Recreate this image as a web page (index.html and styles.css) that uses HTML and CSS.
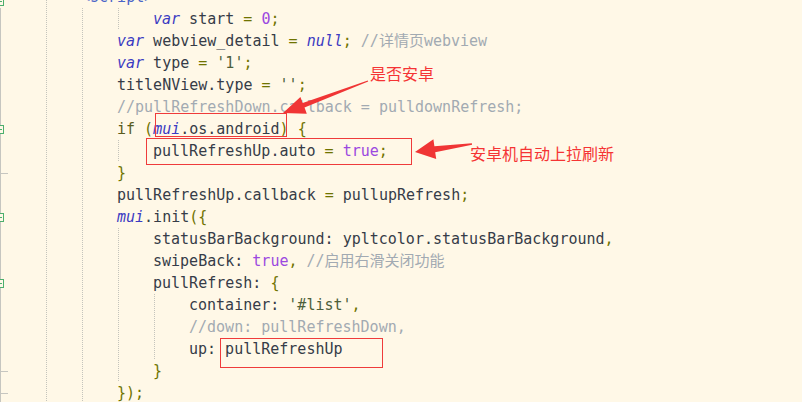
FILE: index.html
```html
<!DOCTYPE html>
<html lang="zh">
<head>
<meta charset="utf-8">
<title>code</title>
<link rel="stylesheet" href="styles.css">
</head>
<body>
<div class="editor">
  <div class="code">
    <div class="row"><div class="gut first"><span class="fold top"></span></div><div class="ln i1"><span class="t">&lt;script&gt;</span></div></div>
    <div class="row"><div class="gut"></div><div class="ln i3"><span class="k">var</span> start <span class="p">=</span> <span class="n">0</span><span class="p">;</span></div></div>
    <div class="row"><div class="gut"></div><div class="ln i2"><span class="k">var</span> webview_detail <span class="p">=</span> <span class="k">null</span><span class="p">;</span> <span class="c">//详情页webview</span></div></div>
    <div class="row"><div class="gut"></div><div class="ln i2"><span class="k">var</span> type <span class="p">=</span> <span class="s">'1'</span><span class="p">;</span></div></div>
    <div class="row"><div class="gut"></div><div class="ln i2">titleNView.type <span class="p">=</span> <span class="s">''</span><span class="p">;</span></div></div>
    <div class="row"><div class="gut"></div><div class="ln i2"><span class="c">//pullRefreshDown.callback = pulldownRefresh;</span></div></div>
    <div class="row"><div class="gut"><span class="fold"></span></div><div class="ln i2"><span class="f">if</span> <span class="p">(</span><span class="k">mui</span>.os.android<span class="p">)</span> <span class="p">{</span></div></div>
    <div class="row"><div class="gut"></div><div class="ln i3">pullRefreshUp.auto <span class="p">=</span> <span class="n">true</span><span class="p">;</span></div></div>
    <div class="row"><div class="gut"><span class="tick"></span></div><div class="ln i2"><span class="p">}</span></div></div>
    <div class="row"><div class="gut"></div><div class="ln i2">pullRefreshUp.callback <span class="p">=</span> pullupRefresh<span class="p">;</span></div></div>
    <div class="row"><div class="gut"><span class="fold"></span></div><div class="ln i2"><span class="k">mui</span>.init<span class="p">({</span></div></div>
    <div class="row"><div class="gut"></div><div class="ln i3">statusBarBackground: ypltcolor.statusBarBackground<span class="p">,</span></div></div>
    <div class="row"><div class="gut"></div><div class="ln i3">swipeBack: <span class="n">true</span><span class="p">,</span> <span class="c">//启用右滑关闭功能</span></div></div>
    <div class="row"><div class="gut"><span class="fold"></span></div><div class="ln i3">pullRefresh: <span class="p">{</span></div></div>
    <div class="row"><div class="gut"></div><div class="ln i4">container: <span class="s">'#list'</span><span class="p">,</span></div></div>
    <div class="row"><div class="gut"></div><div class="ln i4"><span class="c">//down: pullRefreshDown,</span></div></div>
    <div class="row"><div class="gut"></div><div class="ln i4">up: pullRefreshUp</div></div>
    <div class="row"><div class="gut"><span class="tick"></span></div><div class="ln i3"><span class="p">}</span></div></div>
    <div class="row"><div class="gut"><span class="tick"></span></div><div class="ln i2"><span class="p">});</span></div></div>
  </div>

  <div class="notes">
    <div class="box box-a"></div>
    <div class="box box-b"></div>
    <div class="box box-c"></div>
    <div class="label label-a">是否安卓</div>
    <div class="label label-b">安卓机自动上拉刷新</div>
    <svg class="arrows" width="802" height="402" viewBox="0 0 802 402">
      <polygon fill="#f03535" points="368.2,81.5 367.8,80.5 302.7,103.0 300.4,96.9 283,113 306.8,113.7 304.5,107.6"/>
      <polygon fill="#f03535" points="472.1,144.7 471.9,143.3 434.4,146.2 433.4,139.3 415,152 436.2,159.1 435.2,152.2"/>
    </svg>
  </div>
</div>
</body>
</html>
```

FILE: styles.css
```css
html, body {
  margin: 0;
  padding: 0;
  background: #fff8e7;
}
body {
  width: 802px;
  height: 402px;
  overflow: hidden;
}
.editor {
  position: relative;
  width: 802px;
  height: 402px;
  overflow: hidden;
  background: #fff8e7;
}
.code {
  display: flex;
  flex-direction: column;
  margin-top: -14px;
  font-family: "DejaVu Sans Mono", "Noto Sans CJK SC", monospace;
  font-size: 15px;
  color: #363c48;
}
.row {
  display: flex;
  height: 22px;
}
.gut {
  width: 44px;
  flex: none;
  border-left: 1px solid #c6c6c0;
  display: flex;
  align-items: center;
}
.gut.first {
  border-left-color: transparent;
}
.fold {
  display: block;
  width: 9px;
  height: 9px;
  box-sizing: border-box;
  margin-left: -6px;
  border: 1px solid #4caf6e;
  background: #fff8e7;
  position: relative;
}
.fold::after {
  content: "";
  position: absolute;
  left: 1px;
  right: 1px;
  top: 3px;
  height: 1px;
  background: #4caf6e;
}
.fold.top {
  margin-top: 8px;
}
.tick {
  display: block;
  width: 7px;
  height: 1px;
  background: #c6c6c0;
}
.ln {
  flex: 1;
  height: 22px;
  line-height: 22px;
  white-space: pre;
  background-repeat: repeat-y;
  background-size: 1px 2px;
}
.i1 {
  padding-left: 36px;
  background-image: linear-gradient(#c4c4bc 50%, transparent 50%);
  background-position: 1px 0;
}
.i2 {
  padding-left: 72px;
  background-image: linear-gradient(#c4c4bc 50%, transparent 50%), linear-gradient(#c4c4bc 50%, transparent 50%);
  background-position: 1px 0, 37px 0;
}
.i3 {
  padding-left: 108px;
  background-image: linear-gradient(#c4c4bc 50%, transparent 50%), linear-gradient(#c4c4bc 50%, transparent 50%), linear-gradient(#c4c4bc 50%, transparent 50%);
  background-position: 1px 0, 37px 0, 73px 0;
}
.i4 {
  padding-left: 144px;
  background-image: linear-gradient(#c4c4bc 50%, transparent 50%), linear-gradient(#c4c4bc 50%, transparent 50%), linear-gradient(#c4c4bc 50%, transparent 50%), linear-gradient(#c4c4bc 50%, transparent 50%);
  background-position: 1px 0, 37px 0, 73px 0, 109px 0;
}
.t { color: #4a64c8; }
.k { color: #3b3bc2; font-style: italic; }
.n { color: #9b48e0; }
.s { color: #4d5f3a; }
.p { color: #6f7300; }
.f { color: #5a5c1c; }
.c { color: #a2aab2; }

.notes {
  position: absolute;
  inset: 0;
  pointer-events: none;
}
.box {
  position: absolute;
  border: 1px solid #ef3b3b;
  box-sizing: border-box;
}
.box-a { left: 155px; top: 113px; width: 132px; height: 24px; }
.box-b { left: 146px; top: 138px; width: 266px; height: 27px; }
.box-c { left: 220px; top: 338px; width: 163px; height: 30px; }
.label {
  position: absolute;
  font-family: "Noto Sans CJK SC", sans-serif;
  font-size: 16px;
  line-height: 18px;
  color: #f53434;
  white-space: nowrap;
}
.label-a { left: 370px; top: 64px; }
.label-b { left: 470px; top: 144px; }
.arrows {
  position: absolute;
  left: 0;
  top: 0;
}
```
